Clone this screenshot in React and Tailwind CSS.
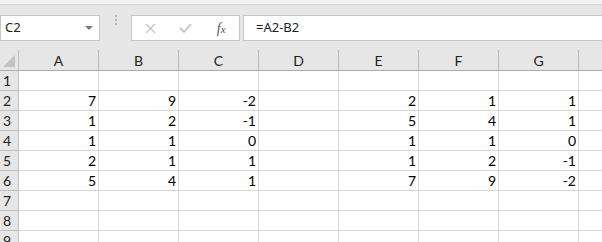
import React from "react";

const cols = ["A", "B", "C", "D", "E", "F", "G", ""];

const data = {
  2: ["7", "9", "-2", "", "2", "1", "1", ""],
  3: ["1", "2", "-1", "", "5", "4", "1", ""],
  4: ["1", "1", "0", "", "1", "1", "0", ""],
  5: ["2", "1", "1", "", "1", "2", "-1", ""],
  6: ["5", "4", "1", "", "7", "9", "-2", ""],
};

const rows = [1, 2, 3, 4, 5, 6, 7, 8, 9];

function NameBox() {
  return (
    <div className="flex h-[26px] w-[100px] items-center justify-between border border-[#c6c6c6] bg-white pl-[4px] pr-[6px]">
      <span className="text-[13px] text-[#222]">C2</span>
      <svg width="8" height="5" viewBox="0 0 8 5">
        <path d="M0 0 L8 0 L4 4 Z" fill="#7a7a7a" />
      </svg>
    </div>
  );
}

function Dots() {
  return (
    <div className="flex w-[31px] flex-col items-center justify-center gap-[2px]">
      <span className="h-[2px] w-[2px] bg-[#b4b4b4]" />
      <span className="h-[2px] w-[2px] bg-[#b4b4b4]" />
      <span className="h-[2px] w-[2px] bg-[#b4b4b4]" />
    </div>
  );
}

function ActionBox() {
  return (
    <div className="flex h-[26px] w-[109px] items-center border border-[#c6c6c6] bg-white">
      <div className="flex w-[36px] justify-center pl-[2px]">
        <svg width="11" height="11" viewBox="0 0 11 11">
          <path d="M1 1 L10 10 M10 1 L1 10" stroke="#c3c3c3" strokeWidth="1.3" />
        </svg>
      </div>
      <div className="flex w-[36px] justify-center">
        <svg width="13" height="10" viewBox="0 0 13 10">
          <path d="M1 5 L5 9 L12 1" stroke="#c3c3c3" strokeWidth="1.8" fill="none" />
        </svg>
      </div>
      <div className="flex w-[36px] justify-center">
        <span className="font-['Liberation_Serif',serif] text-[14px] italic text-[#555]">
          f<span className="text-[11px]">x</span>
        </span>
      </div>
    </div>
  );
}

export default function App() {
  return (
    <div className="h-[242px] w-[602px] overflow-hidden bg-[#e6e6e6] font-['Noto_Sans',sans-serif]">
      <div className="h-[4px] bg-[#f3f3f3]" />
      <div className="h-px bg-[#d5d5d5]" />
      <div className="flex h-[45px] items-start gap-0 pt-[10px]">
        <NameBox />
        <Dots />
        <div className="flex h-[26px] items-center">
          <ActionBox />
        </div>
        <div className="ml-[3px] flex h-[26px] flex-1 items-center border border-r-0 border-[#c6c6c6] bg-white pl-[12px]">
          <span className="text-[13px] text-[#222]">=A2-B2</span>
        </div>
      </div>

      <div className="font-['Lato',sans-serif]">
        <div className="flex h-[21px] border-b border-[#ababab]">
          <div className="flex w-[19px] items-end justify-end border-r border-[#c0c0c0] pb-[3px] pr-[3px]">
            <svg width="12" height="12" viewBox="0 0 12 12">
              <path d="M12 0 L12 12 L0 12 Z" fill="#c2c2c2" />
            </svg>
          </div>
          {cols.map((c, i) => (
            <div
              key={i}
              className={`flex items-center justify-center pt-px text-[14px] text-[#222] ${
                i < 7 ? "w-[80px] border-r border-[#b9b9b9]" : "flex-1"
              }`}
            >
              {c}
            </div>
          ))}
        </div>

        {rows.map((r) => (
          <div key={r} className="flex h-[20px] bg-white">
            <div className="flex w-[19px] items-center border-r border-b border-[#c0c0c0] bg-[#e6e6e6] pl-[3px] text-[14px] text-[#222]">
              {r}
            </div>
            {cols.map((_, i) => (
              <div
                key={i}
                className={`flex items-center justify-end border-b border-[#d4d4d4] pr-[2px] text-[14px] text-black ${
                  i < 7 ? "w-[80px] border-r" : "flex-1"
                }`}
              >
                {data[r] ? data[r][i] : ""}
              </div>
            ))}
          </div>
        ))}
      </div>
    </div>
  );
}
